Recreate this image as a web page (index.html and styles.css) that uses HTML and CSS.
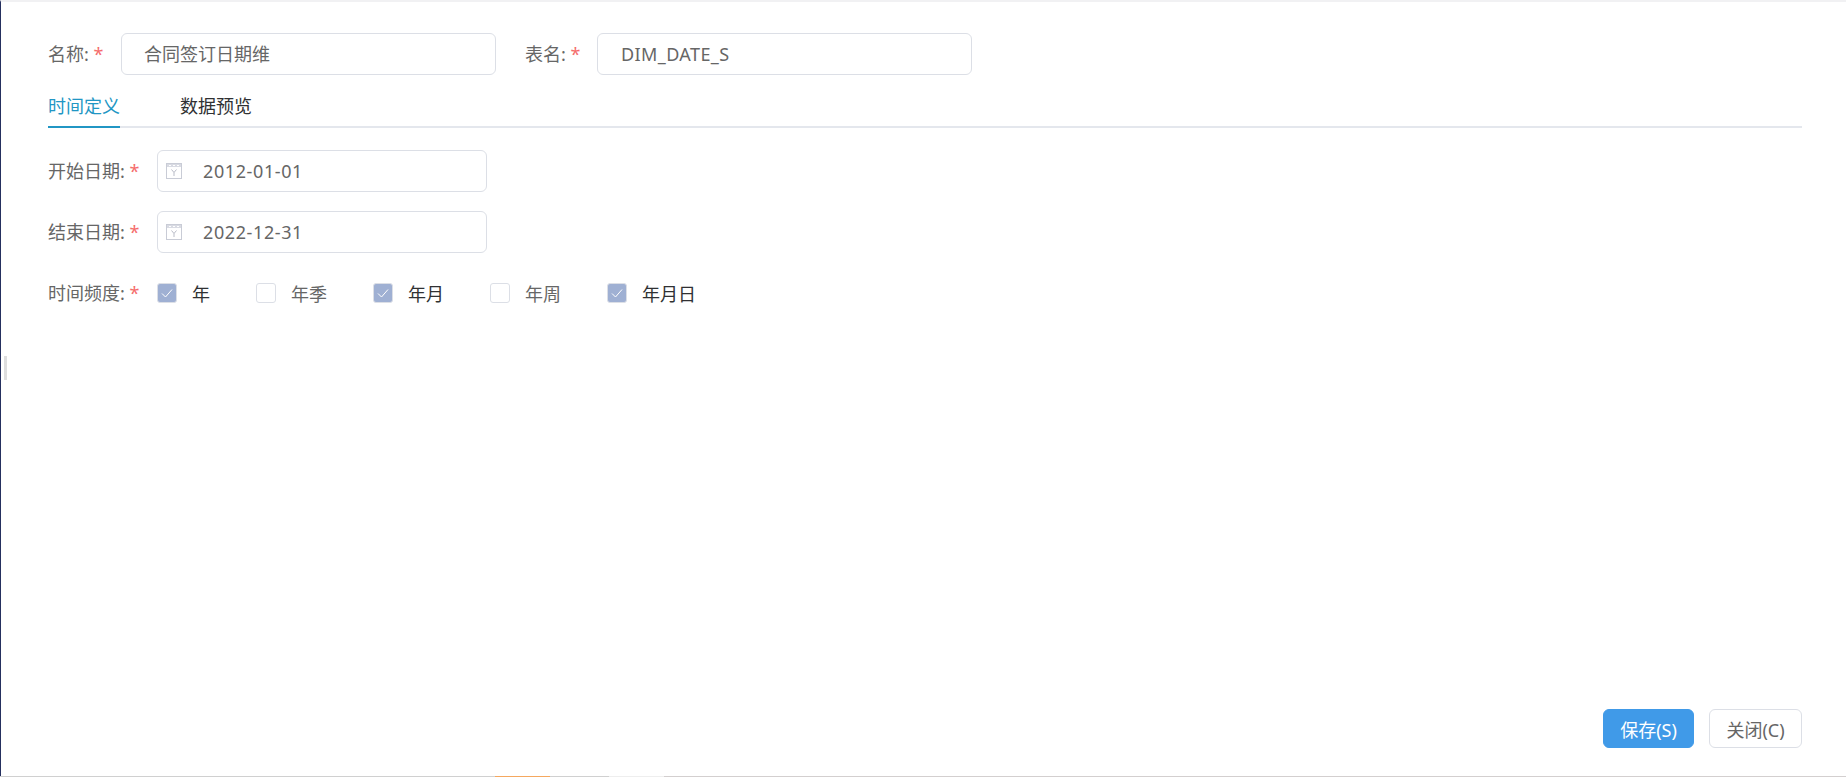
FILE: index.html
```html
<!DOCTYPE html>
<html lang="zh-CN">
<head>
    <meta charset="UTF-8">
    <meta name="viewport" content="width=device-width, initial-scale=1.0">
    <title>合同签订日期维</title>
    <link rel="stylesheet" href="styles.css">
</head>
<body>
    <div class="dialog">
        <span class="drag-handle"></span>

        <!-- Name row -->
        <div class="head-row">
            <label class="field-label name-label">名称: <em>*</em></label>
            <div class="text-box name-box">合同签订日期维</div>
            <label class="field-label table-label">表名: <em>*</em></label>
            <div class="text-box table-box">DIM_DATE_S</div>
        </div>

        <!-- Tabs -->
        <div class="tabs">
            <div class="tab active">时间定义</div>
            <div class="tab">数据预览</div>
        </div>

        <!-- Date fields -->
        <div class="date-row">
            <label class="field-label date-label">开始日期: <em>*</em></label>
            <div class="date-box">
                <svg class="cal-icon" viewBox="0 0 16 16" width="16" height="16">
                    <rect x="0.5" y="0.5" width="15" height="15" fill="none" stroke="#c9ccd6"/>
                    <rect x="1" y="1" width="14" height="3" fill="#d9dbe3"/>
                    <path d="M3 2.5h2M7 2.5h2M11 2.5h2" stroke="#fff" fill="none"/>
                    <path d="M5.5 6.5L8 9.5L10.5 6.5M8 9.5V13" stroke="#b9bcc7" fill="none"/>
                </svg>
                <span class="date-value">2012-01-01</span>
            </div>
        </div>
        <div class="date-row">
            <label class="field-label date-label">结束日期: <em>*</em></label>
            <div class="date-box">
                <svg class="cal-icon" viewBox="0 0 16 16" width="16" height="16">
                    <rect x="0.5" y="0.5" width="15" height="15" fill="none" stroke="#c9ccd6"/>
                    <rect x="1" y="1" width="14" height="3" fill="#d9dbe3"/>
                    <path d="M3 2.5h2M7 2.5h2M11 2.5h2" stroke="#fff" fill="none"/>
                    <path d="M5.5 6.5L8 9.5L10.5 6.5M8 9.5V13" stroke="#b9bcc7" fill="none"/>
                </svg>
                <span class="date-value">2022-12-31</span>
            </div>
        </div>

        <!-- Frequency -->
        <div class="freq-row">
            <label class="field-label date-label">时间频度: <em>*</em></label>
            <div class="check-item on">
                <span class="check-box"><svg viewBox="0 0 18 18" width="18" height="18"><path d="M4 9.5L7.5 13L14 5.5" fill="none" stroke="#fff"/></svg></span>
                <span>年</span>
            </div>
            <div class="check-item">
                <span class="check-box"></span>
                <span>年季</span>
            </div>
            <div class="check-item on">
                <span class="check-box"><svg viewBox="0 0 18 18" width="18" height="18"><path d="M4 9.5L7.5 13L14 5.5" fill="none" stroke="#fff"/></svg></span>
                <span>年月</span>
            </div>
            <div class="check-item">
                <span class="check-box"></span>
                <span>年周</span>
            </div>
            <div class="check-item on">
                <span class="check-box"><svg viewBox="0 0 18 18" width="18" height="18"><path d="M4 9.5L7.5 13L14 5.5" fill="none" stroke="#fff"/></svg></span>
                <span>年月日</span>
            </div>
        </div>

        <div class="footer">
            <button class="btn btn-primary">保存(S)</button>
            <button class="btn">关闭(C)</button>
        </div>
    </div>

    <!-- Sliver of the page behind the dialog -->
    <div class="bottom-strip">
        <span class="seg-gray"></span>
        <span class="seg-orange"></span>
        <span class="seg-mid"></span>
        <span class="seg-light"></span>
        <span class="seg-rest"></span>
    </div>
</body>
</html>
```

FILE: styles.css
```css
html, body {
    margin: 0;
    padding: 0;
    height: 100%;
}

body {
    font-family: "Noto Sans", "Noto Sans CJK SC", sans-serif;
    font-size: 18px;
    color: #666;
    background: #fff;
    display: flex;
    flex-direction: column;
    height: 777px;
    overflow: hidden;
}

.dialog {
    position: relative;
    flex: 1;
    display: flex;
    flex-direction: column;
    border-top: 2px solid #f1f1f3;
    border-left: 1px solid #25305f;
    padding: 0 44px 0 47px;
    min-height: 0;
}

.drag-handle {
    position: absolute;
    left: 3px;
    top: 354px;
    width: 3px;
    height: 24px;
    background: #dedede;
}

.field-label {
    white-space: nowrap;
    line-height: 24px;
}

.field-label em {
    font-style: normal;
    color: #f56c6c;
}

.head-row {
    display: flex;
    align-items: center;
    margin-top: 30px;
    height: 43px;
}

.name-label {
    width: 73px;
}

.table-label {
    width: 72px;
    margin-left: 29px;
}

.text-box {
    box-sizing: border-box;
    width: 375px;
    height: 42px;
    line-height: 40px;
    padding-left: 22px;
    border: 1px solid #dcdfe6;
    border-radius: 6px;
}

.table-box {
    margin-top: 1px;
    padding-left: 23px;
    letter-spacing: 0.4px;
}

.tabs {
    display: flex;
    gap: 60px;
    height: 53px;
    box-sizing: border-box;
    border-bottom: 2px solid #e4e7ed;
}

.tab {
    width: 72px;
    height: 53px;
    box-sizing: border-box;
    padding-top: 17px;
    line-height: 28px;
    color: #303133;
    white-space: nowrap;
}

.tab.active {
    color: #2196c4;
    border-bottom: 2px solid #2196c4;
}

.date-row {
    display: flex;
    align-items: center;
    margin-top: 22px;
    height: 42px;
}

.date-row + .date-row {
    margin-top: 19px;
}

.date-label {
    width: 109px;
}

.date-box {
    box-sizing: border-box;
    width: 330px;
    height: 42px;
    display: flex;
    align-items: center;
    border: 1px solid #dcdfe6;
    border-radius: 6px;
    padding-left: 8px;
}

.cal-icon {
    margin-right: 21px;
}

.date-value {
    letter-spacing: 0.6px;
}

.freq-row {
    display: flex;
    align-items: center;
    margin-top: 29px;
    height: 22px;
}

.check-item {
    display: flex;
    align-items: center;
    margin-right: 46px;
}

.check-item.on {
    color: #303133;
}

.check-box {
    box-sizing: border-box;
    display: flex;
    width: 20px;
    height: 20px;
    margin-right: 15px;
    border: 1px solid #dcdfe6;
    border-radius: 3px;
    background: #fff;
}

.check-item.on .check-box {
    background: #9fb0d3;
}

.footer {
    margin-top: auto;
    margin-bottom: 28px;
    display: flex;
    justify-content: flex-end;
    gap: 15px;
}

.btn {
    box-sizing: border-box;
    height: 39px;
    width: 93px;
    padding: 0;
    font: inherit;
    color: #666;
    background: #fff;
    border: 1px solid #dcdfe6;
    border-radius: 6px;
}

.btn-primary {
    width: 91px;
    color: #fff;
    background: #409ae8;
    border-color: #409ae8;
}

.bottom-strip {
    display: flex;
    height: 1px;
    flex: none;
}

.seg-gray {
    width: 495px;
    background: #d0d0d0;
}

.seg-orange {
    width: 55px;
    background: #f5a860;
}

.seg-mid {
    width: 59px;
    background: #d0d0d0;
}

.seg-light {
    width: 55px;
    background: #eeeeee;
}

.seg-rest {
    flex: 1;
    background: #d3cfcf;
}
```
